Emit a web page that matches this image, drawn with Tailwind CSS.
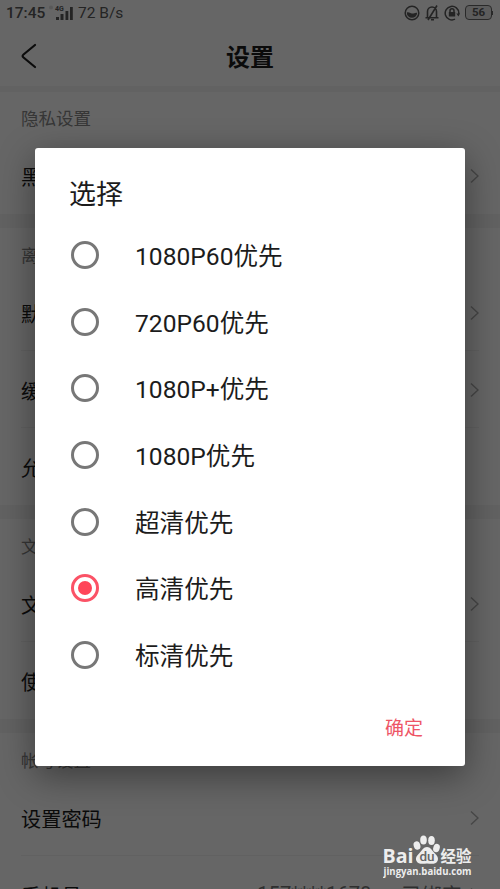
<!DOCTYPE html>
<html lang="zh-CN">
<head>
    <meta charset="UTF-8">
    <meta name="viewport" content="width=device-width, initial-scale=1.0">
    <title>设置</title>
    <script src="https://cdn.jsdelivr.net/npm/@tailwindcss/browser@4"></script>
</head>
<body class="relative h-screen overflow-hidden bg-white font-['Roboto','Noto_Sans_CJK_SC',sans-serif] text-[#1c1c1c]">

    <!-- Status bar -->
    <div class="flex h-[25px] items-center justify-between pl-1.5 pr-[7px] text-[#5a5a5a]">
        <div class="flex items-center pt-px">
            <span class="w-[39px] pt-0.5 text-[15.500px] font-medium leading-none">17:45</span>
            <svg class="ml-1 h-[18px] w-6" viewBox="0 0 24 18" fill="currentColor">
                <circle cx="2" cy="3.500" r="2" opacity=".2"/>
                <text x="6" y="7" font-size="7" font-weight="700">4G</text>
                <rect x="7" y="13" width="3" height="3"/>
                <rect x="11.500" y="10" width="3" height="6"/>
                <rect x="16.500" y="7" width="2.800" height="9"/>
                <rect x="21" y="3" width="2.800" height="13"/>
            </svg>
            <span class="ml-[5px] pt-0.5 text-[15.500px] leading-none">72 B/s</span>
        </div>
        <div class="flex items-center gap-[5px]">
            <svg class="size-4" viewBox="0 0 16 16" fill="none" stroke="currentColor" stroke-width="1.500">
                <circle cx="8" cy="8" r="6.800"/>
                <path d="M2.800 7.500c2-1 3.300.8 5.200 1 2 .2 3-1.300 5.200-.7a5.200 5.200 0 0 1-10.400-.3Z" fill="currentColor" stroke="none"/>
            </svg>
            <svg class="h-4 w-[14px]" viewBox="0 0 14 16" fill="none" stroke="currentColor" stroke-width="1.600">
                <path d="M.5 12.700h13M2.500 12V6.500a4.500 4.500 0 0 1 9 0V12M12 .5 3 15M6 14.800h3"/>
            </svg>
            <svg class="size-4" viewBox="0 0 16 16" fill="none" stroke="currentColor" stroke-width="1.500">
                <path d="M11 14.200A6.800 6.800 0 1 1 14.800 8v1"/>
                <path d="m12.300 8.500 2.200 3 1.500-3Z" fill="currentColor" stroke="none"/>
                <rect x="4.800" y="7" width="6.400" height="4.500" fill="currentColor" stroke="none"/>
                <path d="M6 7V5.800a2 2 0 0 1 4 0V7"/>
            </svg>
            <div class="flex items-center">
                <div class="flex h-[15px] w-[27px] items-center justify-center rounded-[4px] border border-[#666] bg-[#e6e6e6] text-[11.500px] font-bold leading-none">56</div>
                <div class="h-1 w-px bg-[#666]"></div>
            </div>
        </div>
    </div>

    <!-- Title bar -->
    <header class="grid h-[61px] grid-cols-[60px_1fr_60px] items-center">
        <svg class="ml-5 h-[26px] w-[18px]" viewBox="0 0 18 26" fill="none" stroke="currentColor" stroke-width="2.200" stroke-linecap="round" stroke-linejoin="round">
            <path d="M15 2 3.500 11.500q-1.800 1.500 0 3L15 24"/>
        </svg>
        <h1 class="pt-[5px] text-center text-[24px] font-bold">设置</h1>
    </header>
    <div class="h-1.5 bg-[#f6f6f6]"></div>

    <!-- Settings list -->
    <main class="text-[20.200px]">
        <section class="px-[21px]">
            <h2 class="flex h-[45px] items-center pt-2.5 text-[17.500px] text-[#888]">隐私设置</h2>
            <div class="flex h-[77px] items-center justify-between pt-1">
                <span class="pt-0.5">黑名单管理</span>
                <svg class="mb-1 h-4 w-[9px]" viewBox="0 0 9 16" fill="none" stroke="#b0b0b0" stroke-width="1.500"><path d="m1 1.500 7 6.500-7 6.500"/></svg>
            </div>
        </section>
        <div class="h-3.5 bg-[#f4f4f4]"></div>

        <section class="px-[21px]">
            <h2 class="flex h-[46px] items-center pt-2.5 text-[17.500px] text-[#888]">离线设置</h2>
            <div class="flex h-[77px] items-center justify-between border-b border-[#f2f2f2] pt-1">
                <span class="pt-0.5">默认缓存清晰度</span>
                <svg class="mb-0.5 h-4 w-[9px]" viewBox="0 0 9 16" fill="none" stroke="#b0b0b0" stroke-width="1.500"><path d="m1 1.500 7 6.500-7 6.500"/></svg>
            </div>
            <div class="flex h-[77px] items-center justify-between border-b border-[#f2f2f2] pt-1">
                <span class="pt-0.5">缓存路径</span>
                <svg class="mb-0.5 h-4 w-[9px]" viewBox="0 0 9 16" fill="none" stroke="#b0b0b0" stroke-width="1.500"><path d="m1 1.500 7 6.500-7 6.500"/></svg>
            </div>
            <div class="flex h-[77px] items-center pt-1.5">允许缓存</div>
        </section>
        <div class="h-3.5 bg-[#f4f4f4]"></div>

        <section class="px-[21px]">
            <h2 class="flex h-[46px] items-center pt-2.5 text-[17.500px] text-[#888]">文章设置</h2>
            <div class="flex h-[77px] items-center justify-between border-b border-[#f2f2f2] pt-1">
                <span class="pt-0.5">文章字号</span>
                <svg class="mb-0.5 h-4 w-[9px]" viewBox="0 0 9 16" fill="none" stroke="#b0b0b0" stroke-width="1.500"><path d="m1 1.500 7 6.500-7 6.500"/></svg>
            </div>
            <div class="flex h-[77px] items-center pt-1.5">使用设置</div>
        </section>
        <div class="h-3.5 bg-[#f4f4f4]"></div>

        <section class="px-[21px]">
            <h2 class="flex h-[46px] items-center pt-2.5 text-[17.500px] text-[#888]">帐号设置</h2>
            <div class="flex h-[77px] items-center justify-between border-b border-[#f2f2f2] pt-1">
                <span class="pt-0.5">设置密码</span>
                <svg class="mb-0.5 h-4 w-[9px]" viewBox="0 0 9 16" fill="none" stroke="#b0b0b0" stroke-width="1.500"><path d="m1 1.500 7 6.500-7 6.500"/></svg>
            </div>
            <div class="flex h-[77px] items-center pt-1">
                <span class="pt-0.5">手机号</span>
                <span class="ml-auto pb-1 text-[#777]">157****1678</span>
                <span class="ml-[30px] text-[#777]">已绑定</span>
                <svg class="mb-1 ml-2 h-4 w-[9px]" viewBox="0 0 9 16" fill="none" stroke="#b0b0b0" stroke-width="1.500"><path d="m1 1.500 7 6.500-7 6.500"/></svg>
            </div>
        </section>
    </main>

    <!-- Dialog -->
    <div class="absolute inset-0 bg-black/60 px-[35px] pt-[148px]">
        <div class="flex h-[618px] flex-col rounded-[3px] bg-white px-[34px] shadow-[0_10px_36px_rgba(0,0,0,0.42)]">
            <h2 class="pt-[27px] text-[27px] leading-10">选择</h2>
            <ul class="mt-[6.500px] text-[24.600px]">
                <li class="flex h-[66.700px] items-center">
                    <span class="ml-0.5 mr-9 size-7 rounded-full border-3 border-[#777]"></span><span class="pt-[5px]">1080P60优先</span>
                </li>
                <li class="flex h-[66.700px] items-center">
                    <span class="ml-0.5 mr-9 size-7 rounded-full border-3 border-[#777]"></span><span class="pt-[5px]">720P60优先</span>
                </li>
                <li class="flex h-[66.700px] items-center">
                    <span class="ml-0.5 mr-9 size-7 rounded-full border-3 border-[#777]"></span><span class="pt-[5px]">1080P+优先</span>
                </li>
                <li class="flex h-[66.700px] items-center">
                    <span class="ml-0.5 mr-9 size-7 rounded-full border-3 border-[#777]"></span><span class="pt-[5px]">1080P优先</span>
                </li>
                <li class="flex h-[66.700px] items-center">
                    <span class="ml-0.5 mr-9 size-7 rounded-full border-3 border-[#777]"></span><span class="pt-[5px]">超清优先</span>
                </li>
                <li class="flex h-[66.700px] items-center">
                    <span class="ml-0.5 mr-9 flex size-7 items-center justify-center rounded-full border-3 border-[#fb5266]">
                        <span class="size-3.5 rounded-full bg-[#ff4559]"></span>
                    </span><span class="pt-[5px]">高清优先</span>
                </li>
                <li class="flex h-[66.700px] items-center">
                    <span class="ml-0.5 mr-9 size-7 rounded-full border-3 border-[#777]"></span><span class="pt-[5px]">标清优先</span>
                </li>
            </ul>
            <button class="mr-2 mt-[27px] self-end text-[19px] text-[#ee5566]">确定</button>
        </div>
    </div>

    <!-- Watermark -->
    <div class="absolute left-[383px] top-[834px] w-[92px] text-[#ededed]">
        <svg class="h-[31px] w-[92px]" viewBox="0 0 92 31" fill="currentColor">
            <text x="-0.500" y="28.700" font-size="20" font-weight="700" font-family="Open Sans" textLength="31" lengthAdjust="spacingAndGlyphs">Bai</text>
            <ellipse cx="34" cy="11.500" rx="3.300" ry="4.300" transform="rotate(-18 34 11.500)"/>
            <ellipse cx="40.500" cy="6" rx="3.300" ry="4.500"/>
            <ellipse cx="48.500" cy="6.500" rx="3.300" ry="4.500"/>
            <ellipse cx="53.500" cy="14" rx="3.200" ry="4.300" transform="rotate(18 53.500 14)"/>
            <path d="M44 13c3.500 0 5 3.500 7.500 6s4.500 5 3 8c-2 4-7 2.500-10.500 2.500s-8.500 1.500-10.500-2.500c-1.500-3 .5-5.500 3-8S40.500 13 44 13Z"/>
            <text x="36.500" y="27" font-size="13.500" fill="#666" font-weight="500">du</text>
            <text x="57.500" y="28.200" font-size="15.500" font-weight="700" textLength="31" lengthAdjust="spacingAndGlyphs">经验</text>
        </svg>
        <svg class="h-[14px] w-[92px]" viewBox="0 0 92 14" fill="currentColor">
            <text x="0.500" y="10" font-size="10.500" font-weight="700" font-family="Open Sans" textLength="88" lengthAdjust="spacingAndGlyphs">jingyan.baidu.com</text>
        </svg>
    </div>

</body>
</html>
